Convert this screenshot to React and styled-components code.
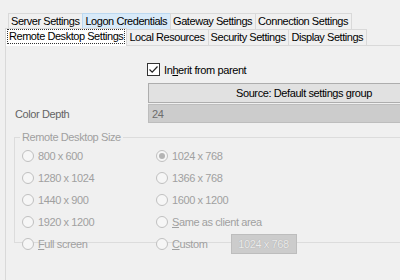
import React from "react";
import styled, { createGlobalStyle } from "styled-components";

const Global = createGlobalStyle`
  html, body { margin: 0; padding: 0; background: #f0f0f0; }
  body { font-family: "Liberation Sans", Arial, sans-serif; font-size: 11px; letter-spacing: -0.4px; }
  #root { width: 400px; height: 280px; overflow: hidden; }
`;

const Window = styled.div`
  width: 400px;
  height: 280px;
  overflow: hidden;
  background: #f0f0f0;
  padding-top: 13px;
  box-sizing: border-box;
`;

const TabRow = styled.div`
  display: flex;
  height: 16px;
  padding-left: ${(p) => p.$indent}px;
`;

const Tab = styled.div`
  box-sizing: border-box;
  height: 16px;
  padding: ${(p) => (p.$selected ? "0 2px" : "0 3px 0 2px")};
  border: 1px solid ${(p) => (p.$hot ? "#bcd8f0" : "#d9d9d9")};
  border-bottom: none;
  margin-right: -1px;
  background: ${(p) => (p.$hot ? "#d8eaf9" : p.$selected ? "#ffffff" : "#f0f0f0")};
  color: #000;
  line-height: 14px;
  white-space: nowrap;
  letter-spacing: -0.45px;
  position: relative;
  z-index: ${(p) => (p.$selected ? 2 : 1)};
  ${(p) => p.$selected && `height: 18px; margin-top: -1px; margin-bottom: -1px;`}
`;

const Focus = styled.span`
  display: inline-block;
  outline: 1px dotted #333;
  outline-offset: 0;
  padding: 0 1px;
  line-height: 13px;
  margin-top: 1px;
`;

const Panel = styled.div`
  margin-left: 5px;
  width: 420px;
  border-top: 1px solid #d9d9d9;
  border-left: 1px solid #d9d9d9;
  background: #f0f0f0;
  display: flex;
  flex-direction: column;
  height: 260px;
`;

const CheckRow = styled.label`
  display: flex;
  align-items: center;
  gap: 4px;
  margin-top: 17px;
  margin-left: 141px;
  height: 13px;
  color: #000;
`;

const Check = styled.span`
  box-sizing: border-box;
  width: 13px;
  height: 13px;
  border: 1px solid #333;
  background: #fff;
  display: flex;
  align-items: center;
  justify-content: center;
`;

const U = styled.span`
  text-decoration: underline;
  text-underline-offset: 1px;
`;

const SourceButton = styled.div`
  box-sizing: border-box;
  margin-top: 7px;
  margin-left: 142px;
  height: 20px;
  border: 1px solid #adadad;
  background: #e1e1e1;
  display: flex;
  align-items: center;
  padding-left: 87px;
  color: #000;
`;

const FieldRow = styled.div`
  display: flex;
  align-items: center;
  margin-top: 1px;
  height: 19px;
`;

const FieldLabel = styled.span`
  width: 133px;
  padding-left: 9px;
  color: #646464;
`;

const Field = styled.div`
  box-sizing: border-box;
  flex: 1;
  height: 19px;
  border: 1px solid #bdbdbd;
  background: #cccccc;
  color: #6d6d6d;
  display: flex;
  align-items: center;
  padding-left: 3px;
`;

const Group = styled.fieldset`
  margin: 8px 0 0 8px;
  padding: 1px 0 0 6px;
  border: 1px solid #dcdcdc;
  height: 112px;
  box-sizing: border-box;
  min-width: 0;
`;

const Legend = styled.legend`
  padding: 0 2px;
  margin-left: -1px;
  color: #a0a0a0;
  line-height: 13px;
`;

const Grid = styled.div`
  display: grid;
  grid-template-columns: 134px 1fr;
  grid-auto-rows: 22px;
  margin-left: 1px;
`;

const RadioItem = styled.div`
  display: flex;
  align-items: center;
  gap: 4px;
  color: #a0a0a0;
  white-space: nowrap;
`;

const Radio = styled.span`
  box-sizing: border-box;
  width: 12px;
  height: 12px;
  border-radius: 50%;
  border: 1px solid #c0c0c0;
  background: #f6f6f6;
  display: flex;
  align-items: center;
  justify-content: center;
  flex: none;
  &::after {
    content: "";
    width: 6px;
    height: 6px;
    border-radius: 50%;
    background: ${(p) => (p.$checked ? "#b4b4b4" : "transparent")};
  }
`;

const CustomBox = styled.div`
  box-sizing: border-box;
  margin-left: 19px;
  width: 66px;
  height: 20px;
  border: 1px solid #bdbdbd;
  background: #cccccc;
  color: #ececec;
  text-shadow: 0 0 1px #9a9a9a;
  display: flex;
  align-items: center;
  justify-content: center;
`;

const sizes = [
  ["800 x 600", false, "1024 x 768", true],
  ["1280 x 1024", false, "1366 x 768", false],
  ["1440 x 900", false, "1600 x 1200", false],
  ["1920 x 1200", false, null, false],
];

export default function App() {
  return (
    <>
      <Global />
      <Window>
        <TabRow $indent={8}>
          <Tab>Server Settings</Tab>
          <Tab $hot>Logon Credentials</Tab>
          <Tab>Gateway Settings</Tab>
          <Tab>Connection Settings</Tab>
        </TabRow>
        <TabRow $indent={5}>
          <Tab $selected>
            <Focus>Remote Desktop Settings</Focus>
          </Tab>
          <Tab>Local Resources</Tab>
          <Tab>Security Settings</Tab>
          <Tab>Display Settings</Tab>
        </TabRow>
        <Panel>
          <CheckRow>
            <Check>
              <svg width="11" height="11" viewBox="0 0 11 11">
                <path d="M1.5 5.5 L4.2 8.2 L9.5 2.5" fill="none" stroke="#222" strokeWidth="1.2" />
              </svg>
            </Check>
            <span>
              In<U>h</U>erit from parent
            </span>
          </CheckRow>
          <SourceButton>Source: Default settings group</SourceButton>
          <FieldRow>
            <FieldLabel>Color Depth</FieldLabel>
            <Field>24</Field>
          </FieldRow>
          <Group>
            <Legend>Remote Desktop Size</Legend>
            <Grid>
              {sizes.map(([a, ac, b, bc]) => (
                <React.Fragment key={a}>
                  <RadioItem>
                    <Radio $checked={ac} />
                    {a}
                  </RadioItem>
                  <RadioItem>
                    <Radio $checked={bc} />
                    {b ?? (
                      <span>
                        <U>S</U>ame as client area
                      </span>
                    )}
                  </RadioItem>
                </React.Fragment>
              ))}
              <RadioItem>
                <Radio />
                <span>
                  <U>F</U>ull screen
                </span>
              </RadioItem>
              <RadioItem>
                <Radio />
                <span>
                  <U>C</U>ustom
                </span>
                <CustomBox>1024 x 768</CustomBox>
              </RadioItem>
            </Grid>
          </Group>
        </Panel>
      </Window>
    </>
  );
}
